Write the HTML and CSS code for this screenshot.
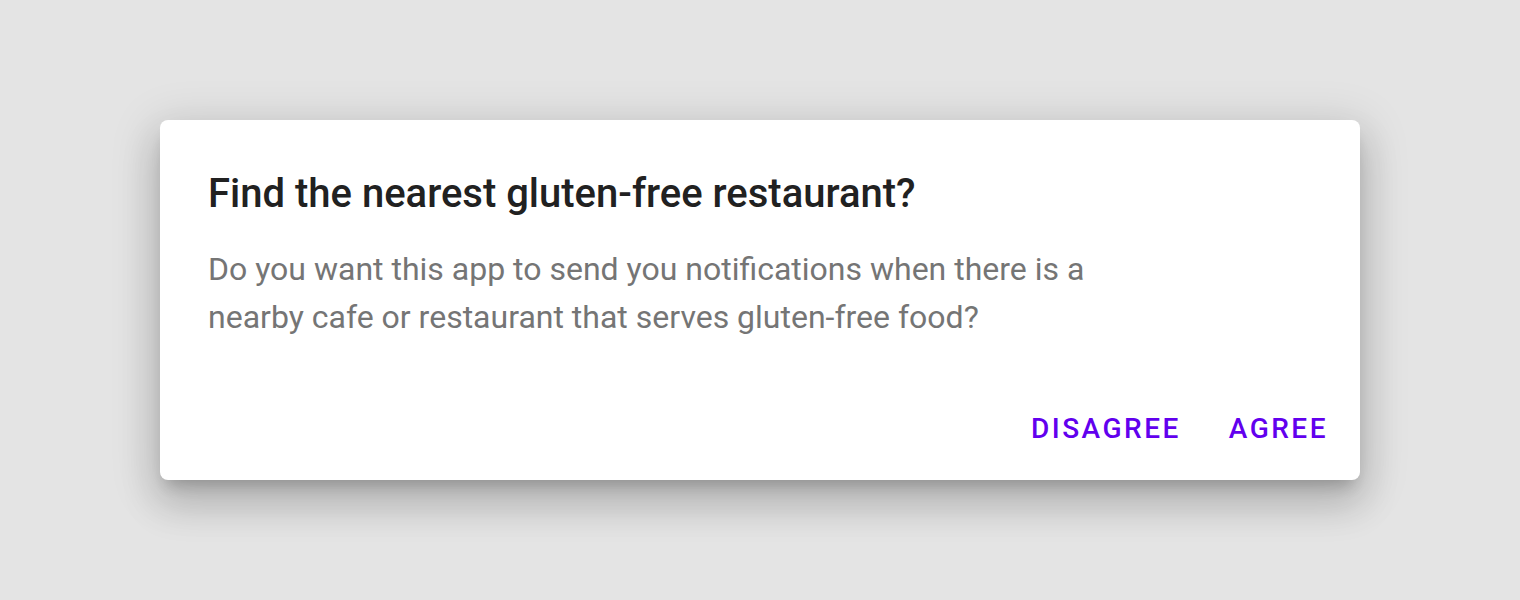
FILE: index.html
```html
<!DOCTYPE html>
<html lang="en">
<head>
<meta charset="utf-8">
<title>Dialog</title>
<link rel="stylesheet" href="styles.css">
</head>
<body>
<div class="stage">
  <div class="dialog" role="dialog">
    <h2 class="dialog-title">Find the nearest gluten-free restaurant?</h2>
    <p class="dialog-content">Do you want this app to send you notifications when there is a<br>nearby cafe or restaurant that serves gluten-free food?</p>
    <div class="dialog-actions">
      <button class="btn">Disagree</button>
      <button class="btn">Agree</button>
    </div>
  </div>
</div>
</body>
</html>
```
FILE: styles.css
```css
html, body {
  margin: 0;
  padding: 0;
  background: #e4e4e4;
}
.stage {
  height: 600px;
  display: flex;
  align-items: center;
  justify-content: center;
  font-family: Roboto, "Liberation Sans", sans-serif;
}
.dialog {
  width: 1200px;
  height: 360px;
  box-sizing: border-box;
  background: #fff;
  border-radius: 8px;
  box-shadow: 0 11px 15px -7px rgba(0,0,0,.2), 0 24px 38px 3px rgba(0,0,0,.14), 0 9px 46px 8px rgba(0,0,0,.12);
  display: flex;
  flex-direction: column;
}
.dialog-title {
  margin: 0;
  padding: 42px 48px 0;
  font-size: 40px;
  line-height: 64px;
  font-weight: 500;
  color: #212121;
  letter-spacing: 0;
}
.dialog-content {
  margin: 0;
  padding: 19px 48px 0;
  font-size: 32px;
  line-height: 48px;
  color: #757575;
  letter-spacing: 0;
  flex: 1;
}
.dialog-actions {
  display: flex;
  justify-content: flex-end;
  gap: 16px;
  padding: 16px;
}
.btn {
  border: 0;
  background: none;
  font-family: inherit;
  text-transform: uppercase;
  font-size: 28px;
  font-weight: 500;
  letter-spacing: 2.5px;
  color: #6200ee;
  padding: 0 16px;
  height: 72px;
  line-height: 74px;
}
```
